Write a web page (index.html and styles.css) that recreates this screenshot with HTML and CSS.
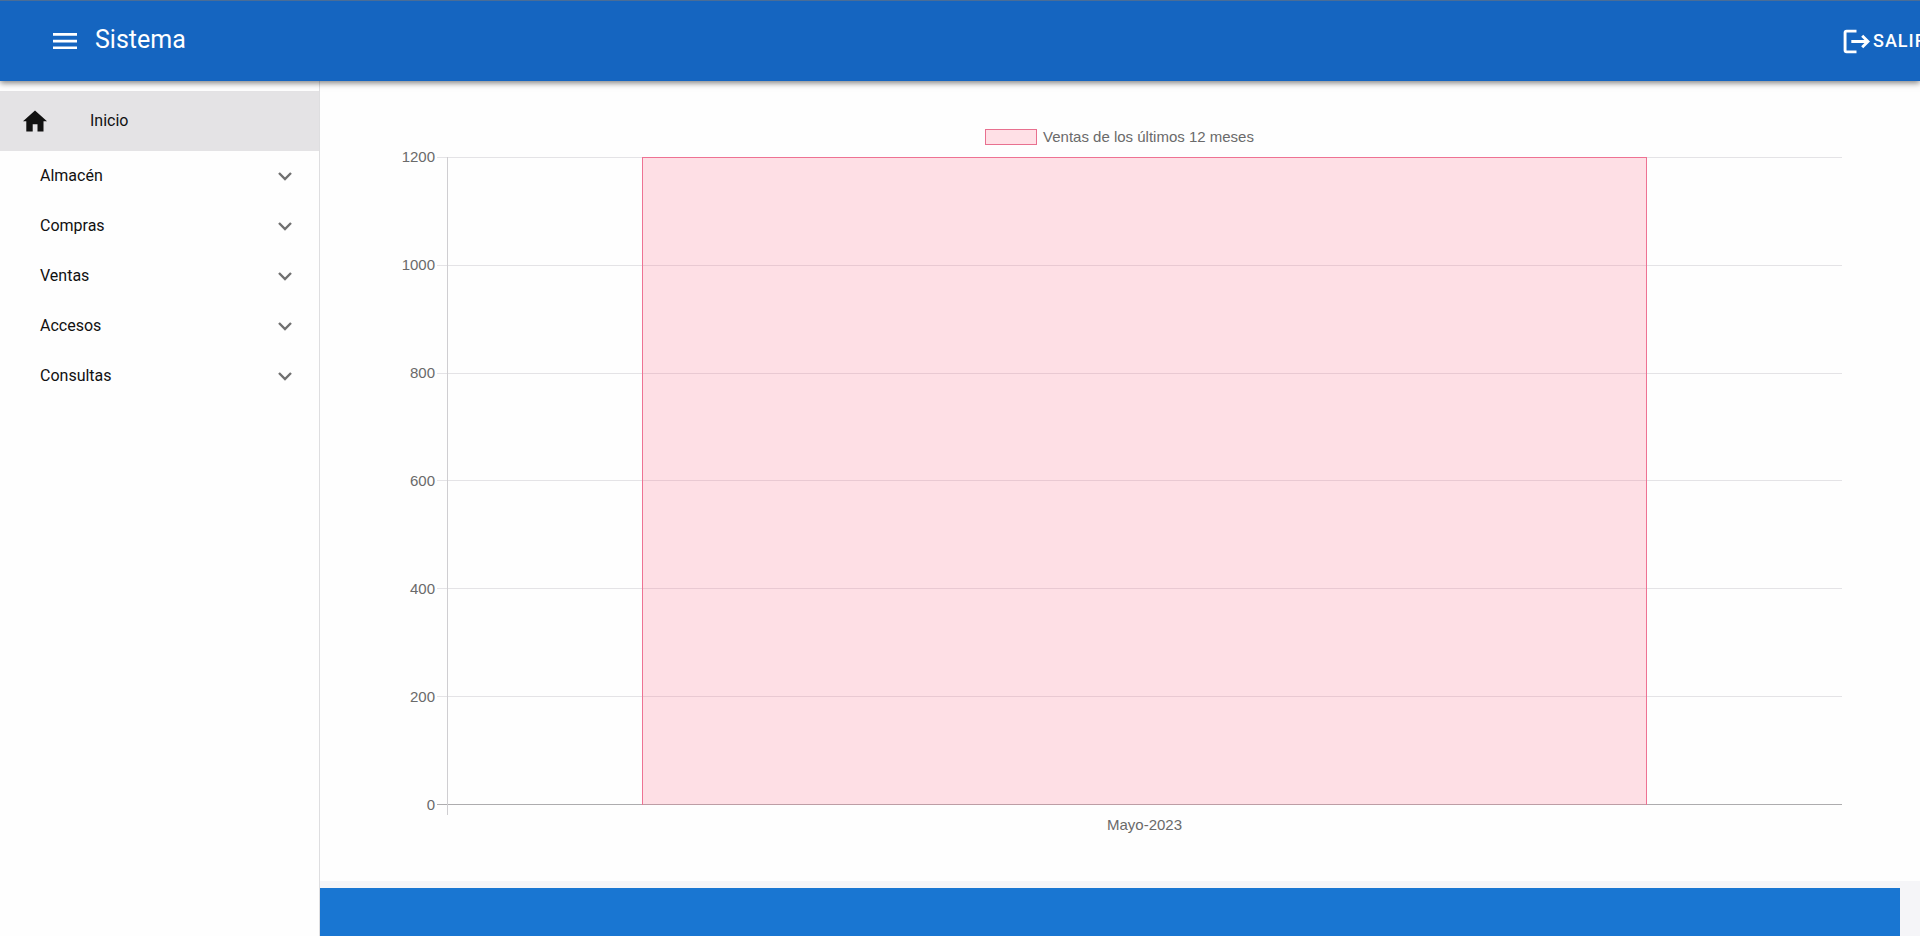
FILE: index.html
```html
<!DOCTYPE html>
<html lang="es">
<head>
<meta charset="utf-8">
<title>Sistema</title>
<meta name="viewport" content="width=device-width, initial-scale=1">
<link rel="stylesheet" href="styles.css">
</head>
<body class="app">
<header class="topbar">
  <button class="menu-button" type="button" aria-label="Menú">
    <svg class="icon" viewBox="0 0 24 24"><path d="M0 4h24v2.700H0zM0 10.700h24v2.700H0zM0 17.400h24v2.700H0z"/></svg>
  </button>
  <h1 class="brand">Sistema</h1>
  <button class="logout" type="button">
    <svg class="logout-icon" viewBox="0 0 26 24" aria-hidden="true"><path d="M13 2H3.500A1.500 1.500 0 0 0 2 3.500v17A1.500 1.500 0 0 0 3.500 22H13M8 12h16M18.500 6.500 24 12l-5.500 5.500"/></svg>
    <span>SALIR</span>
  </button>
</header>
<div class="body">
  <nav class="sidebar">
    <a class="home" href="#">
      <svg class="icon" viewBox="0 0 24 24" aria-hidden="true"><path d="M9.700 22.500v-7.300h4.800v7.300h6V12.200H24L12 1.500 0 12.200h3.300v10.300z"/></svg>
      <span>Inicio</span>
    </a>
    <button class="group" type="button"><span>Almacén</span><svg class="chevron" viewBox="0 0 14 9" aria-hidden="true"><path d="m1 1 6 6 6-6"/></svg></button>
    <button class="group" type="button"><span>Compras</span><svg class="chevron" viewBox="0 0 14 9" aria-hidden="true"><path d="m1 1 6 6 6-6"/></svg></button>
    <button class="group" type="button"><span>Ventas</span><svg class="chevron" viewBox="0 0 14 9" aria-hidden="true"><path d="m1 1 6 6 6-6"/></svg></button>
    <button class="group" type="button"><span>Accesos</span><svg class="chevron" viewBox="0 0 14 9" aria-hidden="true"><path d="m1 1 6 6 6-6"/></svg></button>
    <button class="group" type="button"><span>Consultas</span><svg class="chevron" viewBox="0 0 14 9" aria-hidden="true"><path d="m1 1 6 6 6-6"/></svg></button>
  </nav>
  <div class="content">
    <main class="panel">
      <figure class="chart">
        <figcaption class="legend"><span class="swatch"></span>Ventas de los últimos 12 meses</figcaption>
        <div class="y-axis">
          <span>1200</span><span>1000</span><span>800</span><span>600</span><span>400</span><span>200</span><span>0</span>
        </div>
        <div class="plot">
          <div class="grid-lines"><i></i><i></i><i></i><i></i><i></i><i></i></div>
          <div class="axis-line"></div>
          <div class="bar" style="height:100%"></div>
        </div>
        <div class="x-axis">Mayo-2023</div>
      </figure>
    </main>
    <footer class="footer"></footer>
  </div>
</div>
</body>
</html>
```
FILE: styles.css
```css
* { box-sizing: border-box; }

.app {
  margin: 0;
  min-height: 100vh;
  display: flex;
  flex-direction: column;
  overflow-x: hidden;
  background: #f5f5f8;
  color: #111;
  font: 400 16px/24px Roboto, sans-serif;
}

button {
  border: 0;
  padding: 0;
  background: none;
  color: inherit;
  font: inherit;
  letter-spacing: inherit;
  cursor: pointer;
}

.icon {
  display: block;
  width: 24px;
  height: 24px;
  fill: currentColor;
}

.topbar {
  position: relative;
  z-index: 1;
  display: flex;
  align-items: center;
  height: 81px;
  padding-left: 53px;
  border-top: 1px solid #4a6d96;
  background: #1565c0;
  color: #fff;
  box-shadow: 0 2px 6px rgba(0, 0, 0, .5);
  overflow-x: clip;
}

.brand {
  margin: 0 0 0 18px;
  padding-bottom: 2px;
  font-size: 25px;
  font-weight: 400;
  line-height: 32px;
}

.logout {
  display: flex;
  align-items: center;
  gap: 3px;
  margin: 0 -7px 0 auto;
  font-size: 18px;
  font-weight: 500;
  letter-spacing: 1px;
}

.logout-icon {
  width: 27px;
  height: 25px;
  fill: none;
  stroke: currentColor;
  stroke-width: 2.800;
}

.body {
  flex: 1;
  display: flex;
}

.sidebar {
  flex: none;
  width: 320px;
  padding-top: 10px;
  border-right: 1px solid #dedee0;
  background: #fefefe;
}

.home {
  display: flex;
  align-items: center;
  gap: 43px;
  height: 60px;
  padding-left: 23px;
  background: #e4e3e5;
  color: inherit;
  text-decoration: none;
}

.group {
  display: flex;
  align-items: center;
  justify-content: space-between;
  width: 100%;
  height: 50px;
  padding: 0 27px 0 40px;
}

.chevron {
  width: 14px;
  height: 9px;
  fill: none;
  stroke: #707070;
  stroke-width: 2.400;
}

.content {
  flex: 1;
  min-width: 0;
  display: flex;
  flex-direction: column;
  gap: 7px;
}

.panel {
  flex: 1;
  display: flex;
  padding: 46px 78px 46px 80px;
  background: #fefefe;
}

.chart {
  flex: 1;
  display: grid;
  grid-template-columns: 35px 1fr;
  grid-template-rows: 20px 1fr 20px;
  column-gap: 12px;
  row-gap: 10px;
  margin: 0;
  color: #6a6a6a;
  font: 400 15px/20px "Liberation Sans", Arial, sans-serif;
}

.legend {
  grid-column: 1 / -1;
  display: flex;
  align-items: center;
  justify-content: center;
  gap: 6px;
  padding-right: 3px;
}

.swatch {
  width: 52px;
  height: 16px;
  border: 1px solid #e8708f;
  background: #ffe0e6;
}

.y-axis {
  display: flex;
  flex-direction: column;
  justify-content: space-between;
  margin: -10px 0;
  text-align: right;
}

.plot {
  display: grid;
}

.grid-lines,
.axis-line,
.bar {
  grid-area: 1 / 1;
}

.grid-lines {
  display: flex;
  flex-direction: column;
  margin-left: -10px;
}

.grid-lines i {
  flex: 1;
  border-top: 1px solid #e4e3e6;
}

.grid-lines i:last-child {
  border-bottom: 1px solid #adacae;
}

.axis-line {
  width: 1px;
  margin-bottom: -10px;
  background: #cfced1;
}

.bar {
  justify-self: center;
  align-self: end;
  width: 72%;
  border: 1px solid #ee7293;
  border-bottom: 0;
  background: rgba(255, 99, 132, .2);
}

.x-axis {
  grid-column: 2;
  text-align: center;
}

.footer {
  height: 48px;
  margin-right: 20px;
  background: #1976d2;
}
```
